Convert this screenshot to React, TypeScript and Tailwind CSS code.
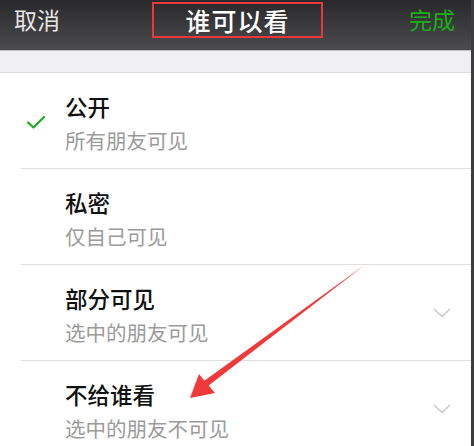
import React from "react";

const font = { fontFamily: '"Noto Sans CJK SC", "Noto Sans", sans-serif' };

type Option = { title: string; desc: string; checked?: boolean; more?: boolean };

const options: Option[] = [
  { title: "公开", desc: "所有朋友可见", checked: true },
  { title: "私密", desc: "仅自己可见" },
  { title: "部分可见", desc: "选中的朋友可见", more: true },
  { title: "不给谁看", desc: "选中的朋友不可见", more: true },
];

function Check() {
  return (
    <svg width="20" height="16" viewBox="0 0 20 16" fill="none">
      <path d="M2 8.5 L7.5 13.5 L18 3" stroke="#1aad19" strokeWidth="2.2" strokeLinecap="round" strokeLinejoin="round" />
    </svg>
  );
}

function Chevron() {
  return (
    <svg width="18" height="10" viewBox="0 0 18 10" fill="none">
      <path d="M1 1 L9 8.5 L17 1" stroke="#c7c7cc" strokeWidth="1.4" />
    </svg>
  );
}

function Row({ o, last }: { o: Option; last: boolean }) {
  return (
    <div className="flex h-[96px] shrink-0">
      <div className="w-[21px] shrink-0" />
      <div className={`flex flex-1 ${last ? "" : "border-b border-[#e0e0e0]"}`}>
        <div className="flex w-[44px] shrink-0 items-center pl-[5px] pt-[2px]">{o.checked && <Check />}</div>
        <div className="flex flex-1 flex-col pt-[18px]">
          <div className="text-[22.5px] leading-[31px] font-medium text-[#111]">{o.title}</div>
          <div className="mt-[3px] text-[20.5px] leading-[30px] text-[#9b9b9b]">{o.desc}</div>
        </div>
        <div className="flex w-[38px] shrink-0 items-center">{o.more && <Chevron />}</div>
      </div>
    </div>
  );
}

export default function App() {
  return (
    <div className="relative flex h-[446px] w-[474px] overflow-hidden bg-white" style={font}>
      <div className="flex flex-1 flex-col">
        {/* Nav bar */}
        <div className="flex h-[50px] shrink-0 items-start justify-between bg-gradient-to-b from-[#29292b] to-[#4c4c4e] pl-[14px] pr-[16px] pt-[3px]">
          <span className="text-[23px] leading-[32px] text-[#e6e6e6]">取消</span>
          <div className="-mt-[1px] ml-[6px] flex h-[36px] w-[171px] items-center justify-center border-2 border-[#e8383b]">
            <span className="text-[25px] leading-[30px] font-medium tracking-[1px] text-white">谁可以看</span>
          </div>
          <span className="text-[23px] leading-[32px] text-[#1aad19]">完成</span>
        </div>

        {/* Spacer band */}
        <div className="h-[23px] shrink-0 border-t border-[#bdbdbd] border-b border-b-[#dcdcdc] bg-[#efeff4]" />

        {/* Options */}
        <div className="flex flex-col">
          {options.map((o, i) => (
            <Row key={o.title} o={o} last={i === options.length - 1} />
          ))}
        </div>
      </div>
      <div className="w-[3px] shrink-0 bg-[#3c3c3c]" />

      {/* Annotation arrow */}
      <svg className="pointer-events-none absolute left-0 top-0" width="474" height="446" viewBox="0 0 474 446">
        <polygon points="366,264 204,381 208,386" fill="#f03a3a" />
        <polygon points="190,398 199,374 215,393" fill="#f03a3a" />
      </svg>
    </div>
  );
}
